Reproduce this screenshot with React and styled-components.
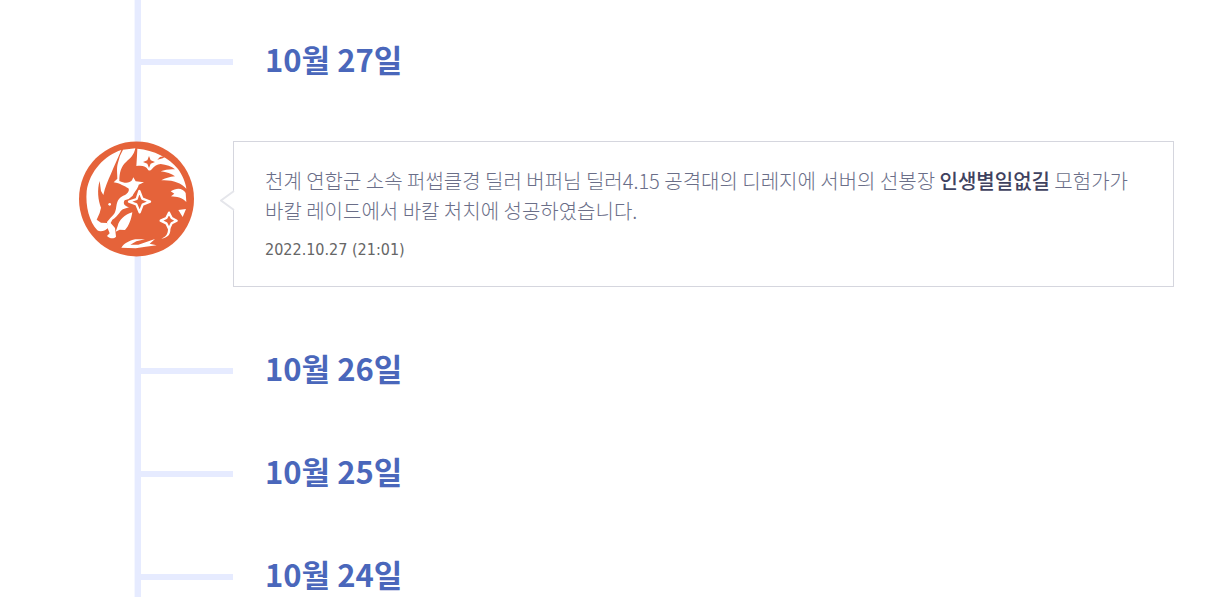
import styled, { createGlobalStyle } from 'styled-components'

const GlobalStyle = createGlobalStyle`
    * {
        box-sizing: border-box;
    }
    body {
        margin: 0;
        background: #fff;
        font-family: "Noto Sans CJK KR", "Noto Sans", sans-serif;
    }
`

const TimelineStyled = styled.main`
    position: relative;
    height: 100vh;
    overflow: hidden;
    padding: 10px 48px 0 79px;

    &::before {
        content: "";
        position: absolute;
        top: 0;
        bottom: 0;
        left: 134px;
        width: 6px;
        background: #e6ebff;
        border-left: 1px solid #f5f7ff;
    }
`

const RowStyled = styled.div`
    position: relative;
    display: grid;
    grid-template-columns: 154px 1fr;
`

const DayStyled = styled(RowStyled)`
    height: 103px;
    align-items: center;
`

const BranchStyled = styled.span`
    height: 6px;
    margin-left: 61px;
    background: #e6ebff;
`

const DateStyled = styled.h2`
    margin: 0;
    padding: 0 0 6px 32px;
    color: #4a67bb;
    font-size: 31px;
    line-height: 34px;
    font-weight: 700;
`

const EventStyled = styled(RowStyled)`
    margin: 28px 0 32px;
    align-items: start;
`

const EmblemStyled = styled.svg`
    width: 115px;
    height: 116px;
`

const CardStyled = styled.article`
    position: relative;
    padding: 24px 31px;
    border: 1px solid #d5d6de;
    background: #fff;
`

const ArrowStyled = styled.svg`
    position: absolute;
    top: 48px;
    left: -14px;
`

const MessageStyled = styled.p`
    margin: 0 0 12px;
    color: #6a6e88;
    font-size: 20px;
    line-height: 30px;
    font-weight: 300;

    strong {
        color: #3f4260;
        font-weight: 500;
    }
`

const TimeStyled = styled.time`
    display: block;
    color: #666;
    font-family: "DejaVu Sans Condensed", "Noto Sans", sans-serif;
    font-size: 16px;
    line-height: 24px;
`

const Emblem = () => <EmblemStyled viewBox="0 0 345 348" role="img" aria-label="바칼 레이드">
    <circle cx="172.500" cy="174" r="172.500" fill="#e5633a" />
    <g fill="#fff">
        <path d="M127 27 C78 42 32 90 23 150 C19 196 31 242 55 268 C64 274 80 270 90 258 L84 246 L66 245 L53 236 L62 216 L66 200 C57 178 54 145 62 120 L66 150 L73 162 C78 138 87 118 96 98 C107 72 118 49 127 27Z" />
        <path d="M132 26 L169 22 C165 42 154 52 142 62 C126 76 121 95 121 120 C137 128 152 127 159 118 L163 109 L170 121 L195 124 L179 131 C177 143 166 152 161 164 L149 174 L137 178 C131 187 136 195 150 199 L136 203 C123 206 120 224 100 236 L95 246 L108 261 L111 287 C104 295 92 293 84 285 L92 277 L86 262 L84 243 L94 231 C110 218 110 208 112 196 C115 176 122 168 138 162 C148 156 152 148 148 142 C136 136 124 127 104 124 L115 113 C115 95 112 82 117 65 Q122 42 132 26Z" />
        <circle cx="92" cy="190" r="4" />
        <path d="M160 214 C136 222 121 236 116 255 L110 272 L122 266 L138 267 C150 255 157 234 160 214Z" />
        <path d="M175 23 C225 27 270 50 297 84 C310 102 320 125 322 143 C305 125 280 116 247 118 C258 111 272 108 288 106 C278 98 262 94 245 91 C258 86 272 84 288 85 C278 75 262 71 245 69 C234 69 226 76 219 84 Q212 92 207 86 C202 76 190 72 172 75 Q174 48 175 23Z" />
        <path d="M275 151 C294 138 313 142 320 156 L322 183 C310 170 293 167 276 166 L286 158Z M298 207 L321 204 L311 228Z" />
        <path d="M127 320 C134 308 150 299 169 295 L198 295 L172 301 L154 311 L178 311 L228 294 L212 308 L233 313 L200 317 L170 322 L127 320Z M267 264 C267 282 258 288 247 293 C266 290 276 280 274 260Z" />
    </g>
    <path fill="#e5633a" d="M210 45 L215 58 L228 63 L215 68 L210 81 L205 68 L192 63 L205 58Z M235 56 L243 48 L263 44 L251 52Z" />
    <g fill="#e5633a" stroke="#fff" strokeWidth="7" strokeLinejoin="round">
        <path d="M181 150 L190 173 L213 182 L191 191 L182 214 L172 190 L150 182 L173 174Z" />
        <path d="M270 215 L278 231 L293 239 L278 247 L270 263 L262 247 L245 239 L262 231Z" />
    </g>
</EmblemStyled>

const Day = ({date}) => <DayStyled>
    <BranchStyled />
    <DateStyled>{date}</DateStyled>
</DayStyled>

const Event = ({before, name, after, time, dateTime}) => <EventStyled>
    <Emblem />
    <CardStyled>
        <ArrowStyled width="15" height="21" viewBox="0 0 15 21" aria-hidden="true">
            <path d="M14 1 L1 10.500 L14 20" fill="#fff" stroke="#e5e6eb" strokeWidth="2" />
        </ArrowStyled>
        <MessageStyled>{before} <strong>{name}</strong> {after}</MessageStyled>
        <TimeStyled dateTime={dateTime}>{time}</TimeStyled>
    </CardStyled>
</EventStyled>

const days = ['10월 26일', '10월 25일', '10월 24일']

export default function App() {
    return <>
        <GlobalStyle />
        <TimelineStyled>
            <Day date="10월 27일" />
            <Event
                before="천계 연합군 소속 퍼썹클경 딜러 버퍼님 딜러4.15 공격대의 디레지에 서버의 선봉장"
                name="인생별일없길"
                after="모험가가 바칼 레이드에서 바칼 처치에 성공하였습니다."
                time="2022.10.27 (21:01)"
                dateTime="2022-10-27T21:01"
            />
            {days.map(date => <Day key={date} date={date} />)}
        </TimelineStyled>
    </>
}
